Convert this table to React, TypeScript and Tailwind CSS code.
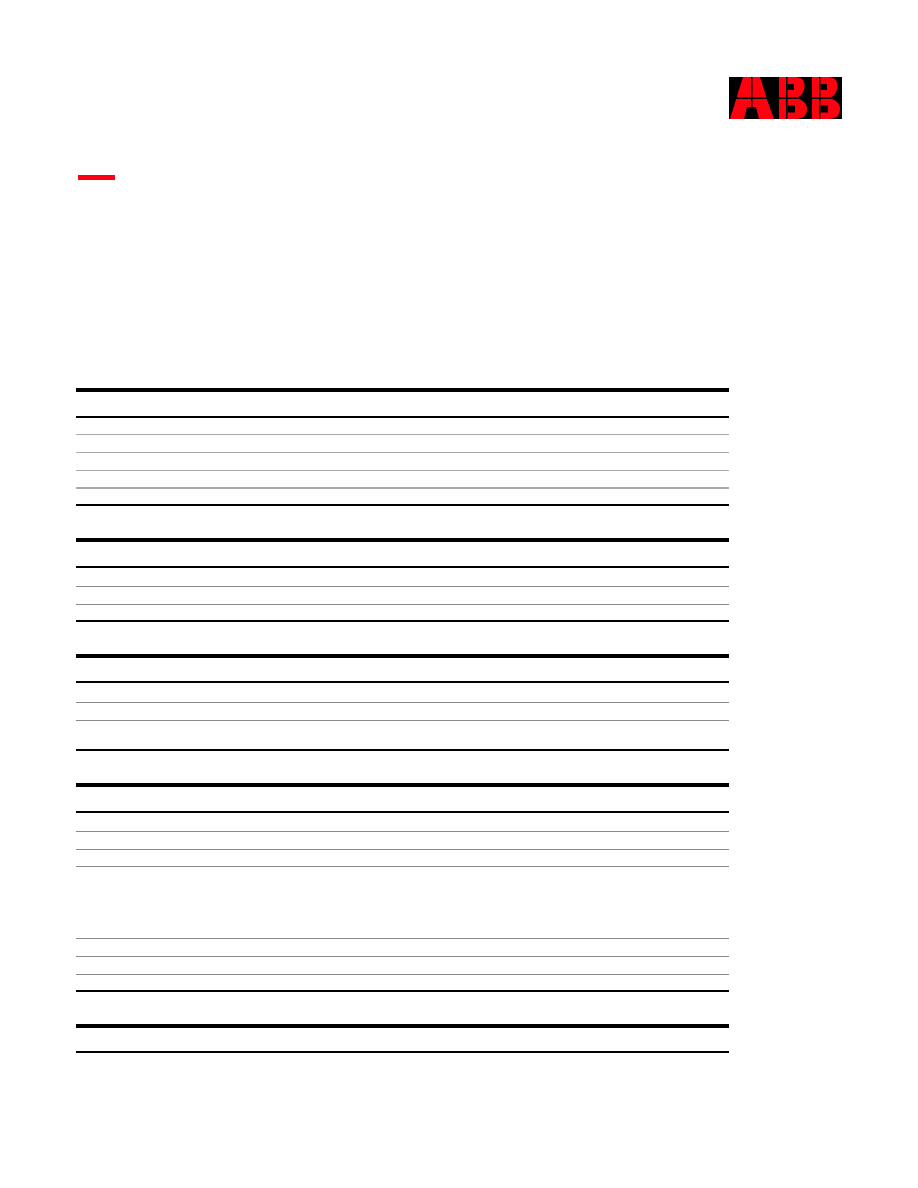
import React from "react";

type Section = {
  header: string;
  rows: string[];
};

// Row heights were read off the reference; each height includes its own border.
const sections: Section[] = [
  {
    header: "h-[26px]",
    rows: [
      "h-[17px] border-b border-[#aaaaaa]",
      "h-[18px] border-b border-[#aaaaaa]",
      "h-[18px] border-b border-[#aaaaaa]",
      "h-[18px] border-b-2 border-[#aaaaaa]",
      "h-[17px] border-b-2 border-black",
    ],
  },
  {
    header: "h-[26px]",
    rows: [
      "h-[19px] border-b border-[#888888]",
      "h-[18px] border-b border-[#888888]",
      "h-[17px] border-b-2 border-black",
    ],
  },
  {
    header: "h-[25px]",
    rows: [
      "h-[20px] border-b border-[#888888]",
      "h-[18px] border-b border-[#888888]",
      "h-[30px] border-b-2 border-black",
    ],
  },
  {
    header: "h-[26px]",
    rows: [
      "h-[19px] border-b border-[#888888]",
      "h-[18px] border-b border-[#888888]",
      "h-[17px] border-b border-[#888888]",
      "h-[72px] border-b border-[#888888]",
      "h-[18px] border-b border-[#888888]",
      "h-[18px] border-b border-[#888888]",
      "h-[17px] border-b-2 border-black",
    ],
  },
  {
    header: "h-[25px]",
    rows: [],
  },
];

function AbbLogo() {
  const red = "#ff000f";
  return (
    <svg width="113" height="42" viewBox="0 0 113 42" aria-label="ABB">
      <rect x="0" y="0" width="113" height="42" fill="#000" />
      {/* A */}
      <polygon points="14,0 22,0 22,20.5 7.6,20.5" fill={red} />
      <polygon points="23.5,0 31,0 37.4,20.5 23.5,20.5" fill={red} />
      <polygon points="7.2,22 22,22 22,30 18,30 15,42 1,42" fill={red} />
      <polygon points="23.5,22 37.8,22 45,42 30,42 27,30 23.5,30" fill={red} />
      {/* B, B */}
      {[50, 83].map((x) => (
        <g key={x} transform={`translate(${x} 0)`}>
          <rect x="0" y="0" width="7" height="20.5" fill={red} />
          <rect x="0" y="22" width="7" height="20" fill={red} />
          <path d="M8.5 0 H16 C22.5 0 25.5 3.5 25.5 8.5 C25.5 14 23 18 19 20.5 H8.5 Z" fill={red} />
          <path d="M8.5 22 H20 C25 24 28 27.5 28 32 C28 38.5 24 42 17 42 H8.5 Z" fill={red} />
          <rect x="8.5" y="7" width="6.5" height="6" fill="#000" />
          <rect x="8.5" y="28.5" width="7.5" height="7" fill="#000" />
        </g>
      ))}
    </svg>
  );
}

function SpecTable({ section }: { section: Section }) {
  return (
    <div className="w-[653px] border-t-4 border-black">
      <div className={`${section.header} border-b-2 border-black`} />
      {section.rows.map((row, i) => (
        <div key={i} className={row} />
      ))}
    </div>
  );
}

export default function App() {
  return (
    <div className="w-[918px] min-h-[1188px] bg-white px-[76px] pt-[77px] font-['Liberation_Sans',Arial,sans-serif]">
      {/* Logo */}
      <header className="flex justify-end">
        <AbbLogo />
      </header>

      {/* Red accent */}
      <div className="mt-[56px] ml-[2px] w-[37px] h-[5px] bg-[#ff000f]" />

      {/* Tables */}
      <div className="mt-[208px] flex flex-col gap-[32px]">
        {sections.map((s, i) => (
          <SpecTable key={i} section={s} />
        ))}
      </div>
    </div>
  );
}
